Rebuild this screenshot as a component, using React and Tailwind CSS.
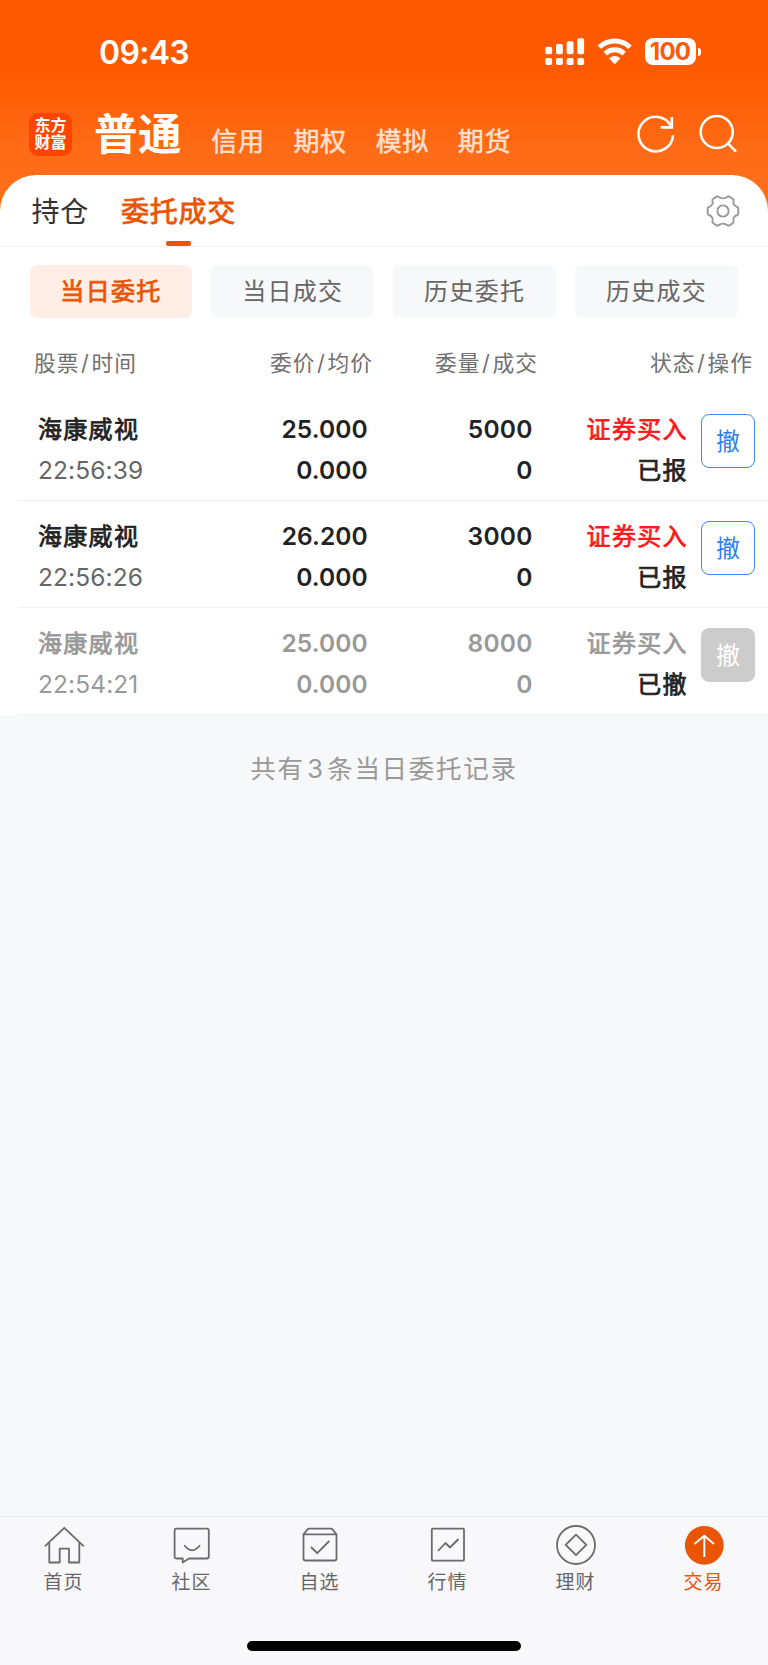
import React from 'react';

const TABS = ['信用', '期权', '模拟', '期货'];

const FILTERS = ['当日委托', '当日成交', '历史委托', '历史成交'];

const COLUMNS = [
  { left: '股票', right: '时间', cls: 'w-[138px]' },
  { left: '委价', right: '均价', cls: 'w-[201px] justify-end' },
  { left: '委量', right: '成交', cls: 'w-[165px] justify-end' },
  { left: '状态', right: '操作', cls: 'w-[215px] justify-end' },
];

const ORDERS = [
  { name: '海康威视', time: '22:56:39', price: '25.000', avg: '0.000', qty: '5000', filled: '0', side: '证券买入', status: '已报', active: true },
  { name: '海康威视', time: '22:56:26', price: '26.200', avg: '0.000', qty: '3000', filled: '0', side: '证券买入', status: '已报', active: true },
  { name: '海康威视', time: '22:54:21', price: '25.000', avg: '0.000', qty: '8000', filled: '0', side: '证券买入', status: '已撤', active: false },
];

const StatusBar = () => (
  <div className="flex h-[104px] pl-[99px] pr-[67px] justify-between">
    <span className="mt-[37px] h-8 text-[32px] leading-8 font-semibold tracking-[-0.7px]">09:43</span>
    <div className="flex mt-[38px] h-[28px] items-start">
      {/* Dual SIM signal */}
      <svg className="w-[40px] h-[28px]" viewBox="0 0 40 28" fill="#fff">
        <rect x="0.3" y="8.7" width="6.8" height="7.6" rx="1.8" />
        <rect x="11" y="6" width="6.8" height="10.3" rx="1.8" />
        <rect x="21.7" y="3.2" width="6.8" height="13.1" rx="1.8" />
        <rect x="32.3" y="0.2" width="6.8" height="16.1" rx="1.8" />
        <rect x="0.3" y="20" width="6.8" height="7" rx="1.8" />
        <rect x="11" y="20" width="6.8" height="7" rx="1.8" />
        <rect x="21.7" y="20" width="6.8" height="7" rx="1.8" />
        <rect x="32.3" y="20" width="6.8" height="7" rx="1.8" />
      </svg>
      {/* Wifi */}
      <svg className="ml-[12px] w-[36px] h-[28px]" viewBox="0 0 36 28" fill="none" stroke="#fff" strokeWidth="5">
        <path d="M2.3 9.3 A22.2 22.2 0 0 1 33.1 9.3" />
        <path d="M8.3 15.6 A13.6 13.6 0 0 1 27.1 15.6" />
        <path d="M12.1 20.3 Q17.7 15.6 23.3 20.3 L18.6 25.4 Q17.7 26.2 16.8 25.4 Z" fill="#fff" stroke="none" />
      </svg>
      <div className="ml-[12px] flex h-[27px] w-[51px] items-center justify-center rounded-[8px] bg-white pt-px pr-px text-[24px] leading-none font-bold tracking-[-0.8px] text-[#ff5a05]">
        100
      </div>
      <div className="ml-[1.5px] mt-[9.5px] h-[8px] w-[3.5px] rounded-r-full bg-white" />
    </div>
  </div>
);

const Header = () => (
  <div className="flex h-[71px] pl-[29px] pr-[29px]">
    <div className="mt-[9px] flex h-[43px] w-[43px] flex-col items-center justify-center rounded-[9px] bg-[#ff4400] pb-px text-[16px] leading-[17px] font-bold">
      <span>东方</span>
      <span>财富</span>
    </div>
    <span className="ml-[22px] mt-[7.5px] h-[44px] w-[88px] text-[43.5px] leading-[44px] font-bold tracking-[0.6px] whitespace-nowrap">普通</span>
    <div className="ml-[29.3px] mt-[23.5px] flex gap-[30px] text-[26px] leading-[28px] tracking-[0.6px] text-[#ffe0d0] [-webkit-text-stroke:0.5px_#ffe0d0]">
      {TABS.map((t) => (
        <span key={t} className="w-[52.2px] whitespace-nowrap">{t}</span>
      ))}
    </div>
    <svg className="ml-auto mt-[8px] w-[44px] h-[44px]" viewBox="0 0 44 44" fill="none" stroke="#fff" strokeWidth="2.6">
      <path d="M40 23.3 A17.3 17.3 0 1 1 38 14" />
      <path d="M38.8 4.9 V15.4 H27.7" />
    </svg>
    <svg className="ml-[20px] mt-[8px] w-[42px] h-[44px]" viewBox="0 0 42 44" fill="none" stroke="#fff" strokeWidth="2.6">
      <circle cx="19.7" cy="20" r="16" />
      <path d="M30.6 31.1 L39 39.6" />
    </svg>
  </div>
);

const GearIcon = () => (
  <svg className="w-[36px] h-[36px]" viewBox="-18 -18 36 36" fill="none" stroke="#999" strokeWidth="1.9" strokeLinejoin="round">
    <circle r="5.6" />
    <path d="M15.3 -2.4 V2.4 Q15.3 3.6 14.2 4 C10.8 5.2 9.6 7.6 10.6 10.4 Q11 11.4 10 12 L6.4 14.4 Q5.4 15 4.6 14.3 C2 12.3 -2 12.3 -4.6 14.3 Q-5.4 15 -6.4 14.4 L-10 12 Q-11 11.4 -10.6 10.4 C-9.6 7.6 -10.8 5.2 -14.2 4 Q-15.3 3.6 -15.3 2.4 V-2.4 Q-15.3 -3.6 -14.2 -4 C-10.8 -5.2 -9.6 -7.6 -10.6 -10.4 Q-11 -11.4 -10 -12 L-6.4 -14.4 Q-5.4 -15 -4.6 -14.3 C-2 -12.3 2 -12.3 4.6 -14.3 Q5.4 -15 6.4 -14.4 L10 -12 Q11 -11.4 10.6 -10.4 C9.6 -7.6 10.8 -5.2 14.2 -4 Q15.3 -3.6 15.3 -2.4 Z" />
  </svg>
);

const OrderRow = ({ order }) => {
  const main = order.active ? 'text-[#222]' : 'text-[#999]';

  return (
    <div className="ml-[18px] flex h-[107.2px] border-b border-[#f0f1f4] pl-[20px] pr-[13px] pt-[15px] text-[24px] leading-[41px]">
      <div className={`w-[150px] ${main}`}>
        <div className="h-[41px] tracking-[1.3px] whitespace-nowrap [-webkit-text-stroke:0.75px]">{order.name}</div>
        <div className={`h-[41px] text-[24.5px] tracking-[0.1px] ${order.active ? 'text-[#666]' : 'text-[#999]'}`}>{order.time}</div>
      </div>
      <div className={`w-[179.8px] text-right text-[24.5px] font-semibold tracking-[0.1px] ${main}`}>
        <div className="h-[41px]">{order.price}</div>
        <div className="h-[41px]">{order.avg}</div>
      </div>
      <div className={`w-[165px] text-right text-[24.5px] font-semibold tracking-[0.3px] ${main}`}>
        <div className="h-[41px]">{order.qty}</div>
        <div className="h-[41px]">{order.filled}</div>
      </div>
      <div className="w-[155px] text-right tracking-[1.3px] whitespace-nowrap [-webkit-text-stroke:0.75px]">
        <div className={`h-[41px] ${order.active ? 'text-[#fa1919]' : 'text-[#999]'}`}>{order.side}</div>
        <div className="h-[41px] text-[#222]">{order.status}</div>
      </div>
      <button
        className={`ml-auto mt-[5.5px] h-[54px] w-[54px] rounded-[8px] border pt-px text-[24px] leading-none ${
          order.active ? 'border-[#3d8bf2] text-[#2f80ed]' : 'border-[#ccc] bg-[#ccc] text-white'
        }`}
      >
        撤
      </button>
    </div>
  );
};

const NAV = [
  {
    label: '首页',
    icon: (
      <>
        <path d="M2.8 23.3 L22.3 4.8 L41.8 23.3" />
        <path d="M7.3 20 V39.5 H17.7 V25.7 H27 V39.5 H37.3 V20" />
      </>
    ),
  },
  {
    label: '社区',
    icon: (
      <>
        <path d="M6.3 5.7 H36.7 Q38.8 5.7 38.8 7.7 V33.5 Q38.8 35.5 36.7 35.5 H19 L12.7 39.5 V35.5 H6.3 Q4.6 35.5 4.6 33.5 V7.7 Q4.6 5.7 6.3 5.7 Z" />
        <path d="M14.3 22.3 Q21.9 32.3 30 22.3" />
      </>
    ),
  },
  {
    label: '自选',
    icon: (
      <>
        <path d="M5.5 11.3 H38.5 V35.5 Q38.5 37.5 36.5 37.5 H7.5 Q5.5 37.5 5.5 35.5 Z" />
        <path d="M5.5 11.3 L9.5 6.5 Q10 5.7 11 5.7 H33 Q34 5.7 34.5 6.5 L38.5 11.3" />
        <path d="M13 24 L19.2 30.2 L31.3 18" />
      </>
    ),
  },
  {
    label: '行情',
    icon: (
      <>
        <rect x="5.8" y="5.7" width="32.2" height="32" rx="1" />
        <path d="M12 28 L19.5 20 L24 24.5 L32.5 16" />
      </>
    ),
  },
  {
    label: '理财',
    icon: (
      <>
        <circle cx="22" cy="22" r="19" />
        <path d="M22 11.6 L32.3 21.9 L22 32.2 L11.7 21.9 Z" />
      </>
    ),
  },
  {
    label: '交易',
    active: true,
    icon: (
      <>
        <circle cx="22.3" cy="22.3" r="19.4" fill="#ea5504" stroke="none" />
        <path d="M22.3 34 V13 M12.5 21 L22.3 12.8 L32 21" stroke="#fff" strokeWidth="2" />
      </>
    ),
  },
];

const BottomNav = () => (
  <div className="h-[149px] border-t border-[#e9eaed] bg-[#f8f8fb]">
    <div className="grid grid-cols-6 h-[124px] content-start">
      {NAV.map(({ label, icon, active }) => (
        <div key={label} className={`flex flex-col items-center pt-[6px] pr-px ${active ? 'text-[#ea5504]' : 'text-[#666]'}`}>
          <svg className="w-[44px] h-[44px]" viewBox="0 0 44 44" fill="none" stroke="#6b6b6b" strokeWidth="1.8" strokeLinejoin="round">
            {icon}
          </svg>
          <span className="mt-[5px] text-[19px] leading-[22px] tracking-[0.9px]">{label}</span>
        </div>
      ))}
    </div>
    <div className="mx-auto h-[9.5px] w-[274px] rounded-full bg-black" />
  </div>
);

const App = () => (
  <div className="flex h-[1665px] w-[768px] flex-col overflow-hidden bg-[#f7f8fa] font-['Inter','Noto_Sans_CJK_SC',sans-serif]">
    <div className="bg-[linear-gradient(180deg,#ff5900_0px,#ff5900_68px,#ff6c17_155px,#ff701c_215px)] text-white">
      <StatusBar />
      <Header />
      <div className="h-[72px] rounded-t-[36px] border-b border-[#f2f3f5] bg-white flex pl-[31.5px] pr-[27px]">
        <span className="mt-[22px] h-[30px] text-[28px] leading-[30px] tracking-[0.8px] text-[#333]">持仓</span>
        <div className="ml-[32px] flex flex-col items-center text-[#ea5504]">
          <span className="mt-[22px] h-[30px] text-[28px] leading-[30px] tracking-[0.7px] [-webkit-text-stroke:0.8px]">委托成交</span>
          <div className="mt-[14px] h-[5px] w-[25px] rounded-[2px] bg-[#ea5504]" />
        </div>
        <div className="ml-auto mt-[18px]">
          <GearIcon />
        </div>
      </div>
    </div>

    <div className="bg-white">
      <div className="grid grid-cols-4 gap-[19px] pl-[29.5px] pr-[30px] pt-[18px]">
        {FILTERS.map((f, i) => (
          <div
            key={f}
            className={`flex h-[53px] items-center justify-center rounded-[7px] pt-px text-[24px] leading-none tracking-[1.3px] ${
              i === 0 ? 'bg-[#feeee6] text-[#ea5504] [-webkit-text-stroke:0.8px]' : 'bg-[#f7f8fa] text-[#666]'
            }`}
          >
            {f}
          </div>
        ))}
      </div>
      <div className="flex h-[75.5px] pt-[31px] pl-[34px] text-[21.7px] leading-[28px] tracking-[1.1px] text-[#707070]">
        {COLUMNS.map((c) => (
          <div key={c.left} className={`flex whitespace-nowrap ${c.cls}`}>
            <span>{c.left}</span>
            <span className="mx-[1.5px]">/</span>
            <span>{c.right}</span>
          </div>
        ))}
      </div>
      {ORDERS.map((o) => (
        <OrderRow key={o.time} order={o} />
      ))}
    </div>

    <div className="flex-1 pt-[37.5px] text-center text-[25.5px] leading-[32px] tracking-[1.7px] text-[#999]">
      共有<span className="mx-[2.5px]">3</span>条当日委托记录
    </div>

    <BottomNav />
  </div>
);

export default App;
